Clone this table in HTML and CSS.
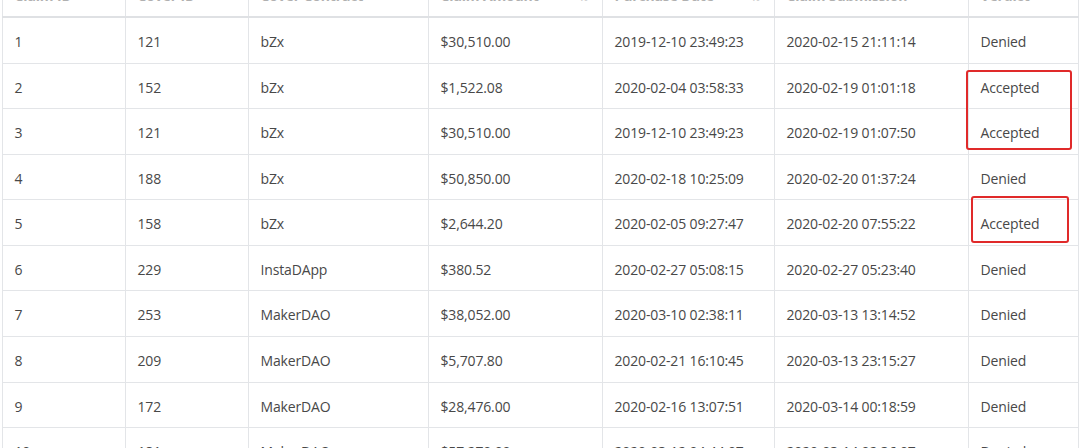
FILE: index.html
```html
<!DOCTYPE html>
<html>
<head>
<meta charset="utf-8">
<link rel="stylesheet" href="styles.css">
</head>
<body>
<div class="wrap">
<table class="claims">
<colgroup>
<col class="c1"><col class="c2"><col class="c3"><col class="c4"><col class="c5"><col class="c6"><col class="c7">
</colgroup>
<thead>
<tr>
<th>Claim ID</th>
<th>Cover ID</th>
<th>Cover Contract</th>
<th>Claim Amount <span class="sort">⇅</span></th>
<th>Purchase Date <span class="sort">⇅</span></th>
<th>Claim Submission</th>
<th>Verdict</th>
</tr>
</thead>
<tbody>
<tr><td>1</td><td>121</td><td>bZx</td><td>$30,510.00</td><td>2019-12-10 23:49:23</td><td>2020-02-15 21:11:14</td><td>Denied</td></tr>
<tr><td>2</td><td>152</td><td>bZx</td><td>$1,522.08</td><td>2020-02-04 03:58:33</td><td>2020-02-19 01:01:18</td><td>Accepted</td></tr>
<tr><td>3</td><td>121</td><td>bZx</td><td>$30,510.00</td><td>2019-12-10 23:49:23</td><td>2020-02-19 01:07:50</td><td>Accepted</td></tr>
<tr><td>4</td><td>188</td><td>bZx</td><td>$50,850.00</td><td>2020-02-18 10:25:09</td><td>2020-02-20 01:37:24</td><td>Denied</td></tr>
<tr><td>5</td><td>158</td><td>bZx</td><td>$2,644.20</td><td>2020-02-05 09:27:47</td><td>2020-02-20 07:55:22</td><td>Accepted</td></tr>
<tr><td>6</td><td>229</td><td>InstaDApp</td><td>$380.52</td><td>2020-02-27 05:08:15</td><td>2020-02-27 05:23:40</td><td>Denied</td></tr>
<tr><td>7</td><td>253</td><td>MakerDAO</td><td>$38,052.00</td><td>2020-03-10 02:38:11</td><td>2020-03-13 13:14:52</td><td>Denied</td></tr>
<tr><td>8</td><td>209</td><td>MakerDAO</td><td>$5,707.80</td><td>2020-02-21 16:10:45</td><td>2020-03-13 23:15:27</td><td>Denied</td></tr>
<tr><td>9</td><td>172</td><td>MakerDAO</td><td>$28,476.00</td><td>2020-02-16 13:07:51</td><td>2020-03-14 00:18:59</td><td>Denied</td></tr>
<tr><td>10</td><td>181</td><td>MakerDAO</td><td>$57,270.00</td><td>2020-03-12 04:44:07</td><td>2020-03-14 02:36:07</td><td>Denied</td></tr>
</tbody>
</table>
<div class="mark mark-a"></div>
<div class="mark mark-b"></div>
</div>
</body>
</html>
```

FILE: styles.css
```css
html, body {
  margin: 0;
  padding: 0;
  background: #ffffff;
  overflow: hidden;
}
body {
  font-family: "Open Sans", "Noto Sans", sans-serif;
  font-size: 14px;
  color: #484848;
}
.wrap {
  position: relative;
  padding-left: 1.5px;
  margin-top: -26px;
}
.claims {
  border-collapse: collapse;
  table-layout: fixed;
  width: 1076px;
}
.c1 { width: 123px; }
.c2 { width: 123px; }
.c3 { width: 180px; }
.c4 { width: 174px; }
.c5 { width: 172px; }
.c6 { width: 194px; }
.c7 { width: 110px; }
.claims th,
.claims td {
  border: 1px solid #e3e5e8;
  text-align: left;
  white-space: nowrap;
  overflow: hidden;
  letter-spacing: -0.15px;
}
.claims th {
  padding: 10px 12px 10px 12px;
  line-height: 21px;
  font-weight: 700;
  color: #b0b0b0;
  border-bottom: 2px solid #dfe1e4;
  vertical-align: bottom;
}
.claims th .sort {
  float: right;
  color: #d0d0d0;
  font-weight: 400;
}
.claims td {
  padding: 14px 12px 10px 12px;
  line-height: 20.56px;
  vertical-align: middle;
}
.mark {
  position: absolute;
  border: 2px solid #e02a2a;
  border-radius: 3px;
  box-sizing: border-box;
}
.mark-a {
  left: 966px;
  top: 96px;
  width: 106px;
  height: 80px;
}
.mark-b {
  left: 971px;
  top: 222px;
  width: 98px;
  height: 47px;
}
```
